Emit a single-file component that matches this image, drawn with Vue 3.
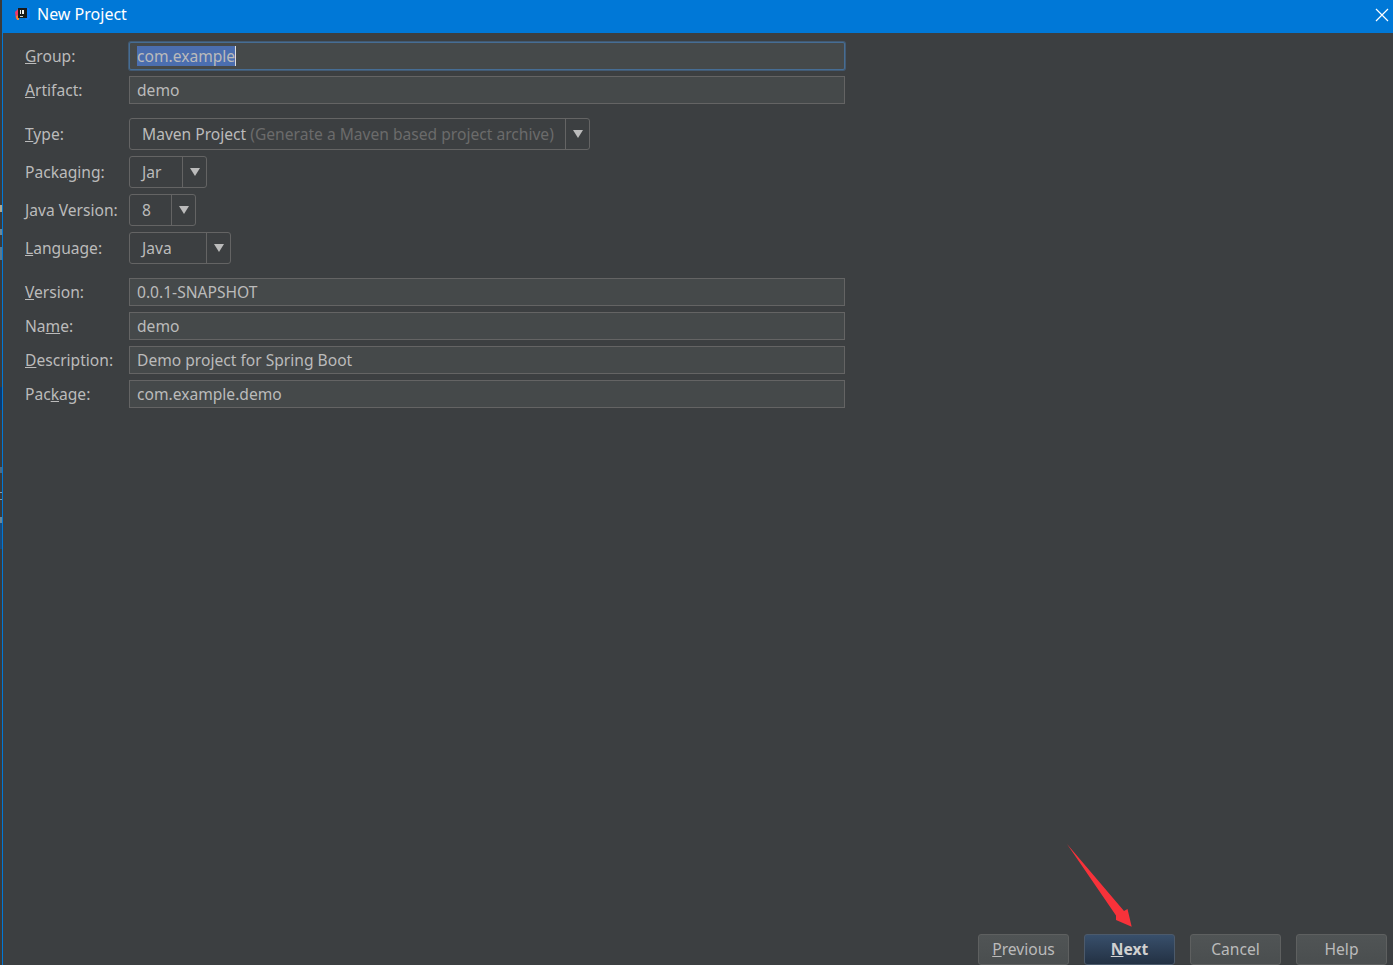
<script setup>
const wideFields = [
  { before: '', key: 'V', after: 'ersion:', value: '0.0.1-SNAPSHOT' },
  { before: 'Na', key: 'm', after: 'e:', value: 'demo' },
  { before: '', key: 'D', after: 'escription:', value: 'Demo project for Spring Boot' },
  { before: 'Pac', key: 'k', after: 'age:', value: 'com.example.demo' }
]
const selects = [
  { before: 'Packa', key: 'g', after: 'ing:', value: 'Jar', cls: 'w-jar' },
  { before: '', key: 'J', after: 'ava Version:', value: '8', cls: 'w-ver' },
  { before: '', key: 'L', after: 'anguage:', value: 'Java', cls: 'w-lang' }
]
</script>

<template>
  <div class="window">
    <div class="strip"></div>
    <div class="frame">
      <header class="titlebar">
        <svg class="logo" width="15" height="13" viewBox="0 0 15 13">
          <path d="M0 4 L3 1 L4 1 L4 11 L1 11 Z" fill="#f0386b" />
          <path d="M1 8 L4 7 L4 12 L2 12 Z" fill="#f58a2a" />
          <path d="M11 0 H14 L15 3 V10 L13 12 H10 Z" fill="#087cfa" />
          <rect x="3" y="0" width="9" height="10" fill="#1a1a1a" />
          <rect x="5" y="2" width="1" height="4" fill="#eeeeee" />
          <rect x="7" y="2" width="2" height="4" fill="#eeeeee" />
          <rect x="5" y="8" width="3" height="1" fill="#cccccc" />
        </svg>
        <span class="title">New Project</span>
        <svg class="close" width="14" height="14" viewBox="0 0 14 14">
          <path d="M1 1 L13 13 M13 1 L1 13" stroke="#fff" stroke-width="1.2" fill="none" />
        </svg>
      </header>

      <main class="content">
        <form class="form" @submit.prevent>
          <section class="group">
            <div class="row">
              <label class="label"><u>G</u>roup:</label>
              <div class="input focused"><span class="selected">com.example</span><i class="caret"></i></div>
            </div>
            <div class="row">
              <label class="label"><u>A</u>rtifact:</label>
              <div class="input">demo</div>
            </div>
          </section>

          <section class="group">
            <div class="row tall">
              <label class="label"><u>T</u>ype:</label>
              <div class="select w-type">
                <span class="sel-value">Maven Project <span class="hint">(Generate a Maven based project archive)</span></span>
                <span class="sel-btn"><i class="tri"></i></span>
              </div>
            </div>
            <div v-for="s in selects" :key="s.value" class="row tall">
              <label class="label">{{ s.before }}<u>{{ s.key }}</u>{{ s.after }}</label>
              <div class="select" :class="s.cls">
                <span class="sel-value">{{ s.value }}</span>
                <span class="sel-btn"><i class="tri"></i></span>
              </div>
            </div>
          </section>

          <section class="group">
            <div v-for="f in wideFields" :key="f.key" class="row">
              <label class="label">{{ f.before }}<u>{{ f.key }}</u>{{ f.after }}</label>
              <div class="input">{{ f.value }}</div>
            </div>
          </section>
        </form>

        <footer class="actions">
          <button class="btn" type="button"><u>P</u>revious</button>
          <button class="btn primary" type="button"><u>N</u>ext</button>
          <button class="btn" type="button">Cancel</button>
          <button class="btn" type="button">Help</button>
        </footer>
      </main>
    </div>

    <svg class="annotation" width="80" height="100" viewBox="0 0 80 100">
      <path d="M2 1 L59 68 L62.5 66 L66.7 83.7 L51 77 L51 72.5 Z" fill="#f7323a" />
    </svg>
  </div>
</template>

<style>
html, body { margin: 0; background: #3c3f41; overflow: hidden; }
</style>

<style scoped>
.window {
  position: relative;
  display: flex;
  width: 1393px;
  height: 965px;
  overflow: hidden;
  font-family: "Noto Sans", "Open Sans", sans-serif;
  font-size: 15.6px;
  color: #bbbbbb;
  background: #3c3f41;
}
.strip {
  flex: 0 0 2px;
  background: linear-gradient(to bottom,
    #3a3a3a 0 205px, #b0a890 205px 212px, #3a3a3a 212px 229px, #6d8796 229px 235px,
    #3a3a3a 235px 247px, #5a7a90 247px 260px, #3a3a3a 260px 387px, #0a3a70 387px 410px,
    #3a3a3a 410px 467px, #4f6a80 467px 473px, #3a3a3a 473px 492px, #8a9aa5 492px 493px,
    #3a3a3a 493px 499px, #8a9aa5 499px 500px, #3a3a3a 500px 517px, #6d8796 517px 523px,
    #1c4a78 523px 549px, #3a3a3a 549px);
}
.frame {
  flex: 1;
  display: flex;
  flex-direction: column;
  border-left: 1px solid #0078d7;
  min-width: 0;
}
.titlebar {
  flex: 0 0 33px;
  display: flex;
  align-items: center;
  background: #0078d7;
  color: #fff;
  padding: 0 4px 5px 12px;
  box-sizing: border-box;
}
.logo { margin-right: 7px; }
.title { font-size: 16px; }
.close { margin-left: auto; margin-top: 2px; }
.content {
  flex: 1;
  display: flex;
  flex-direction: column;
  justify-content: space-between;
  padding: 9px 6px 0 22px;
  min-height: 0;
}
.form {
  display: flex;
  flex-direction: column;
  gap: 14px;
}
.group {
  display: flex;
  flex-direction: column;
  gap: 6px;
}
.row {
  display: flex;
  align-items: center;
  height: 28px;
}
.row.tall { height: 32px; }
.label {
  flex: 0 0 104px;
  white-space: nowrap;
}
.input {
  box-sizing: border-box;
  width: 716px;
  height: 28px;
  padding: 0 7px;
  display: flex;
  align-items: center;
  background: #45494a;
  border: 1px solid #646464;
  white-space: pre;
}
.input.focused {
  border-color: #466d94;
  border-radius: 2px;
  box-shadow: 0 0 0 1px rgba(70, 109, 148, 0.6);
}
.selected {
  background: #4b6eaf;
  color: #bbbbbb;
  line-height: 20px;
}
.caret {
  width: 1px;
  height: 20px;
  background: #dddddd;
}
.select {
  box-sizing: border-box;
  height: 32px;
  display: flex;
  align-items: stretch;
  border: 1px solid #646464;
  border-radius: 3px;
}
.w-type { width: 461px; }
.w-jar { width: 78px; }
.w-ver { width: 67px; }
.w-lang { width: 102px; }
.sel-value {
  flex: 1;
  display: flex;
  align-items: center;
  padding-left: 12px;
  white-space: pre;
}
.hint { color: #6b6b6b; }
.sel-btn {
  flex: 0 0 23px;
  display: flex;
  align-items: center;
  justify-content: center;
  border-left: 1px solid #646464;
}
.tri {
  width: 0;
  height: 0;
  border-left: 5px solid transparent;
  border-right: 5px solid transparent;
  border-top: 8px solid #bbbbbb;
}
.actions {
  display: flex;
  justify-content: flex-end;
  gap: 15px;
  height: 31px;
}
.btn {
  box-sizing: border-box;
  width: 91px;
  height: 31px;
  padding: 0 0 2px;
  font: inherit;
  color: #bbbbbb;
  background: linear-gradient(#505455, #4a4e4f);
  border: 1px solid #5e6060;
  border-radius: 3px;
}
.btn.primary {
  font-weight: 700;
  color: #d0d0d0;
  background: linear-gradient(#384f6b, #233143);
  border-color: #4c5a6b;
}
.annotation {
  position: absolute;
  left: 1065px;
  top: 843px;
}
</style>
